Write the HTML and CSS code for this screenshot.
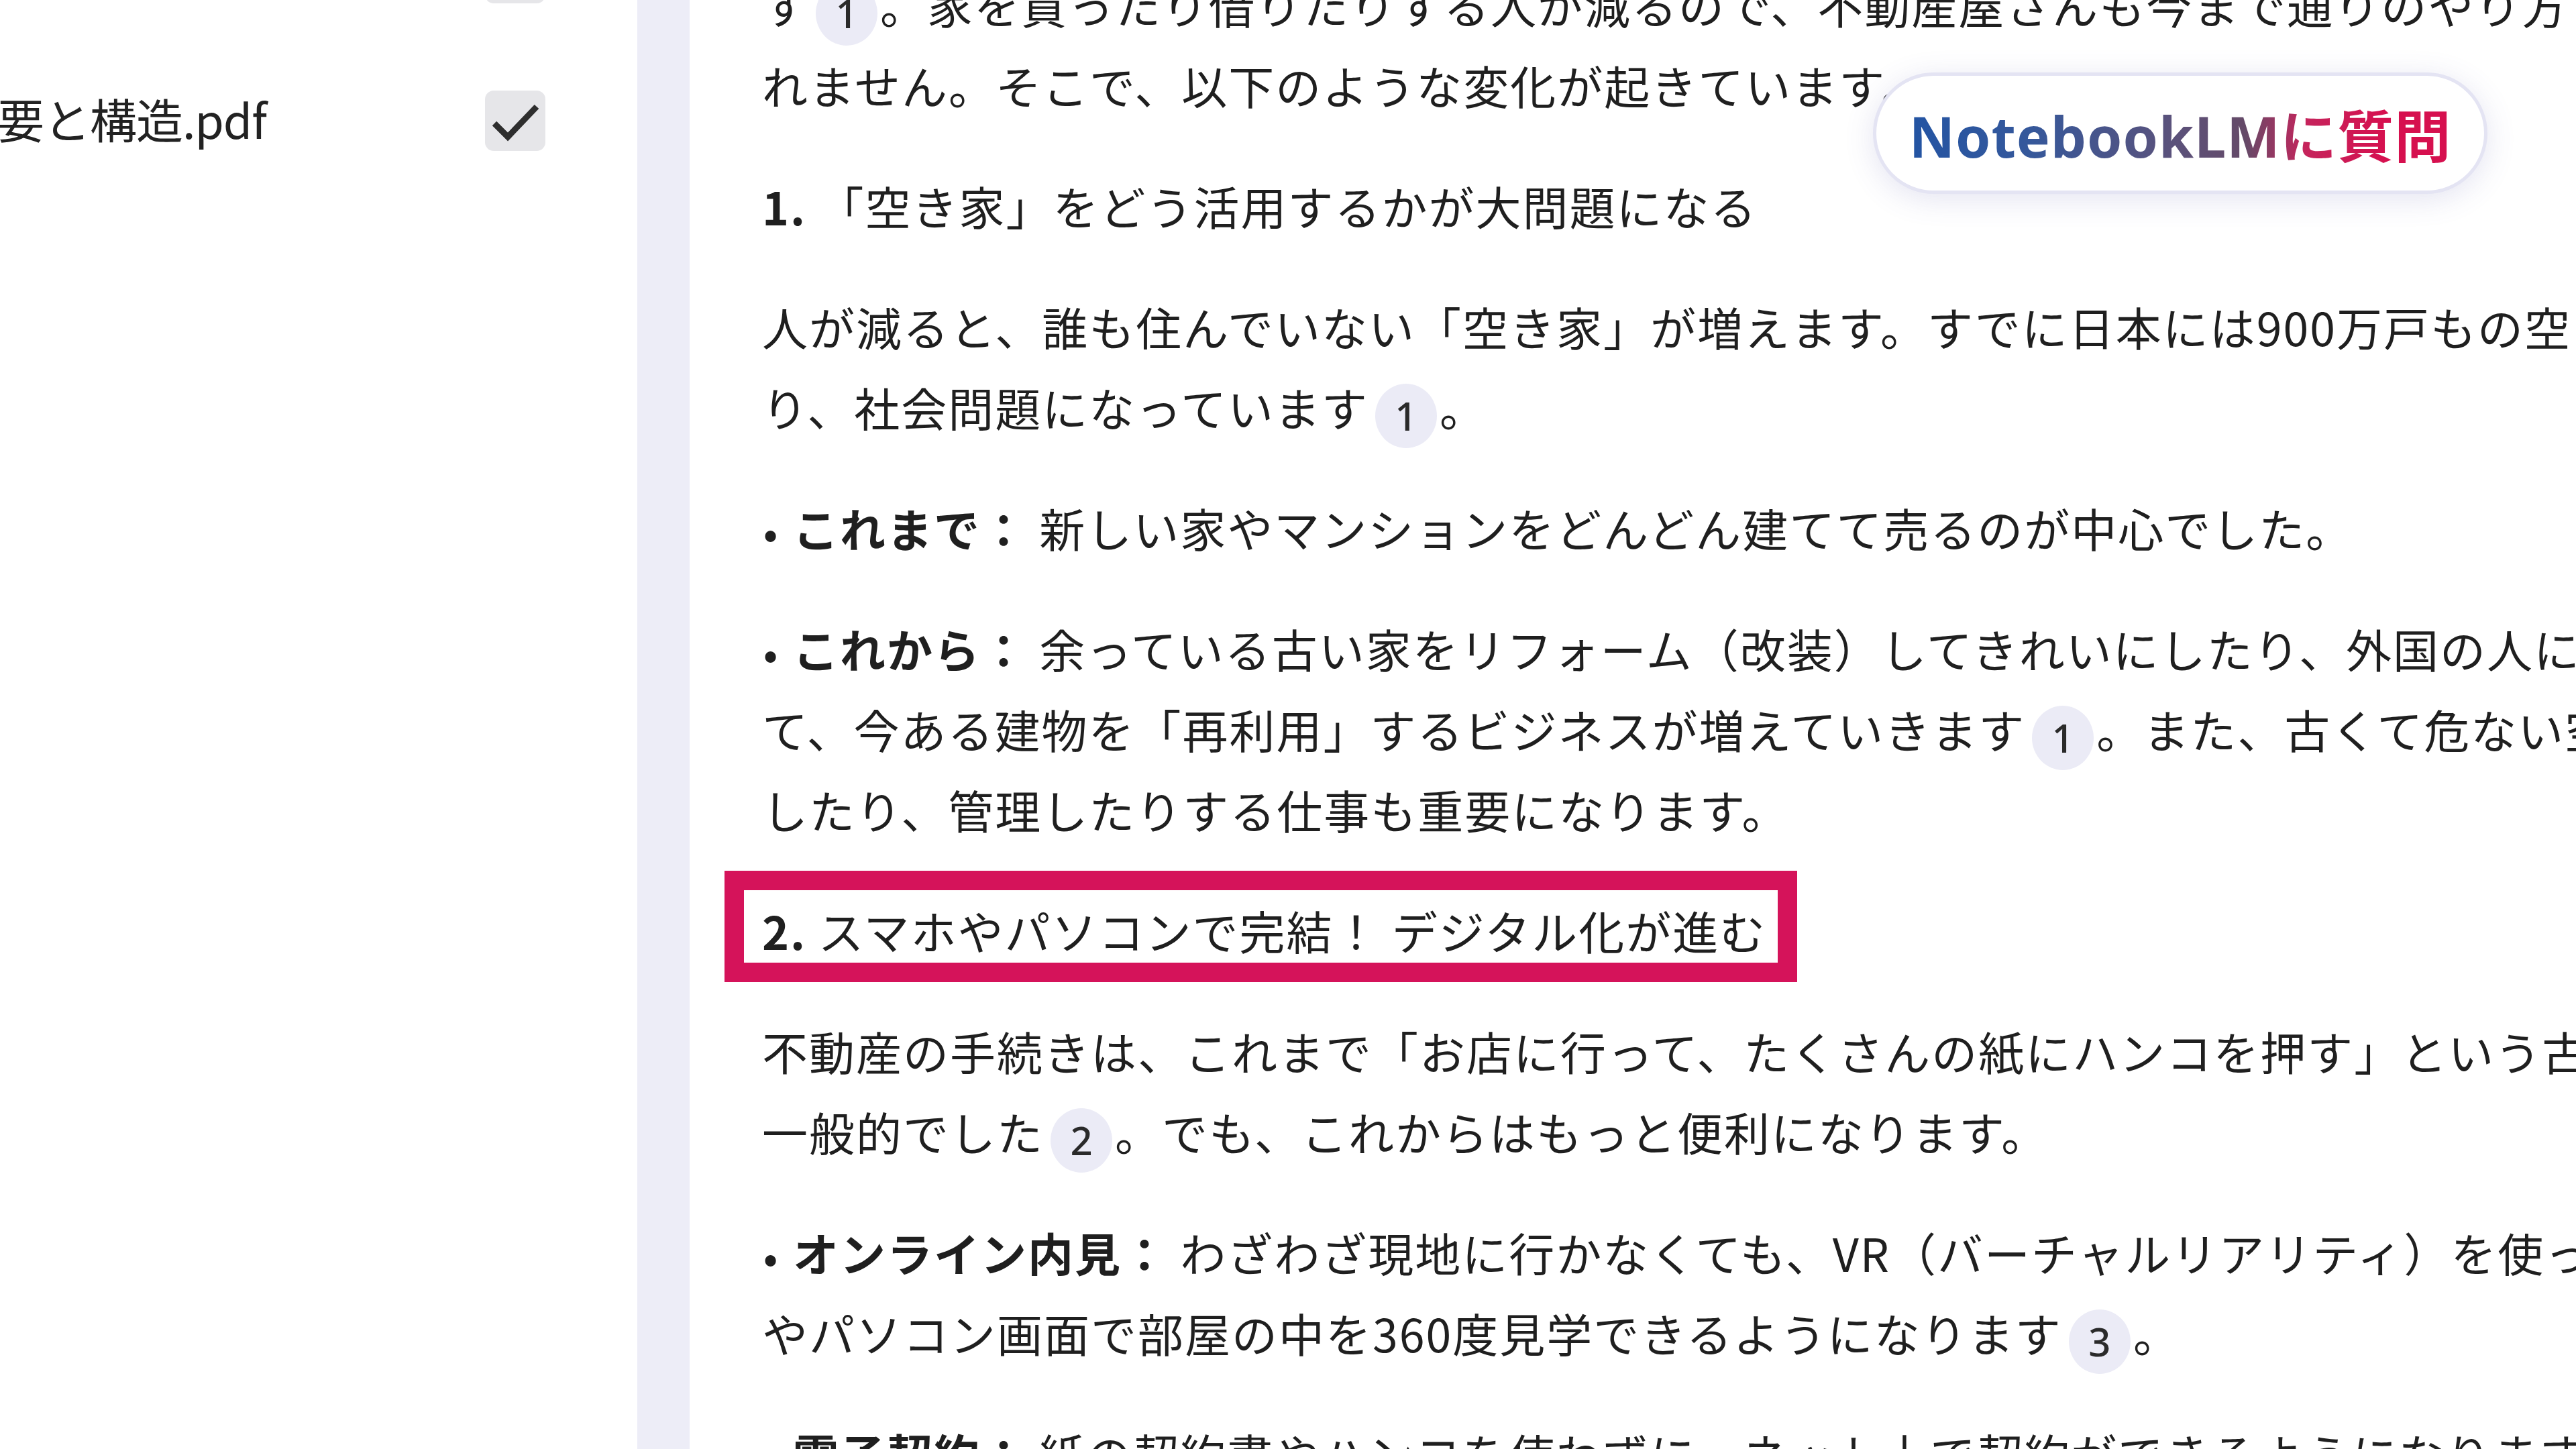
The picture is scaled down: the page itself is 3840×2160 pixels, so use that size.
FILE: index.html
```html
<!DOCTYPE html>
<html lang="ja">
<head>
  <meta charset="UTF-8" />
  <meta name="viewport" content="width=device-width, initial-scale=1.0"/>
  <title>NotebookLM</title>
  <link rel="stylesheet" href="styles.css">
</head>
<body>
  <div class="app">

    <!-- Sources panel -->
    <aside class="sources">
      <div class="source-row">
        <span class="source-name"></span>
        <span class="check">
          <svg viewBox="0 0 90 90" width="90" height="90"><rect width="90" height="90" rx="13" fill="#e6e6e9"/><polyline points="14,49 34,69 77,24" fill="none" stroke="#2e2e2e" stroke-width="9"/></svg>
        </span>
      </div>
      <div class="source-row">
        <span class="source-name"><span>不動産業界の概要と構造.pdf</span></span>
        <span class="check">
          <svg viewBox="0 0 90 90" width="90" height="90"><rect width="90" height="90" rx="13" fill="#e6e6e9"/><polyline points="14,49 34,69 77,24" fill="none" stroke="#2e2e2e" stroke-width="9"/></svg>
        </span>
      </div>
    </aside>

    <div class="gutter"></div>

    <!-- Chat answer -->
    <main class="chat">
      <button class="ask-pill"><span class="ask-text">NotebookLMに質問</span></button>

      <div class="answer">
        <p>す<span class="cite">1</span>。家を買ったり借りたりする人が減るので、不動産屋さんも今まで通りのやり方では生き残<br>れません。そこで、以下のような変化が起きています。</p>

        <p><b>1.</b> 「空き家」をどう活用するかが大問題になる</p>

        <p>人が減ると、誰も住んでいない「空き家」が増えます。すでに日本には900万戸もの空き家があ<br>り、社会問題になっています<span class="cite">1</span>。</p>

        <p><span class="dot">•</span><b>これまで：</b> 新しい家やマンションをどんどん建てて売るのが中心でした。</p>

        <p><span class="dot">•</span><b>これから：</b> 余っている古い家をリフォーム（改装）してきれいにしたり、外国の人に貸し出したりし<br>て、今ある建物を「再利用」するビジネスが増えていきます<span class="cite">1</span>。また、古くて危ない空き家を壊<br>したり、管理したりする仕事も重要になります。</p>

        <p><span class="boxed"><b>2.</b> スマホやパソコンで完結！ デジタル化が進む</span></p>

        <p>不動産の手続きは、これまで「お店に行って、たくさんの紙にハンコを押す」という古いやり方が<br>一般的でした<span class="cite">2</span>。でも、これからはもっと便利になります。</p>

        <p><span class="dot">•</span><b>オンライン内見：</b> わざわざ現地に行かなくても、VR（バーチャルリアリティ）を使ってスマホ<br>やパソコン画面で部屋の中を360度見学できるようになります<span class="cite">3</span>。</p>

        <p><span class="dot">•</span><b>電子契約：</b> 紙の契約書やハンコを使わずに、ネット上で契約ができるようになります。</p>
      </div>
    </main>

  </div>
</body>
</html>
```

FILE: styles.css
```css
* {
  box-sizing: border-box;
}
body {
  margin: 0;
  width: 3840px;
  height: 2160px;
  overflow: hidden;
  background-color: #fff;
  color: #1f1f1f;
  font-family: "Noto Sans CJK JP", "Noto Sans", sans-serif;
}
.app {
  display: flex;
  height: 2160px;
}

/* sources */
.sources {
  flex: none;
  width: 950px;
  padding-right: 137px;
  margin-top: -150px;
  display: flex;
  flex-direction: column;
}
.source-row {
  display: flex;
  align-items: center;
  height: 220px;
}
.source-name {
  flex: none;
  width: 397px;
  margin-right: auto;
  display: flex;
  justify-content: flex-end;
  white-space: nowrap;
  font-size: 70px;
  letter-spacing: -1px;
  color: #222;
  position: relative;
  top: -4px;
}
.check {
  display: flex;
  width: 90px;
  height: 90px;
}
.gutter {
  flex: none;
  width: 78px;
  background-color: #ededf7;
}

/* chat */
.chat {
  flex: 1;
  position: relative;
  overflow: hidden;
  padding-left: 108px;
}
.answer {
  margin-top: -53px;
  font-size: 68px;
  line-height: 120px;
  letter-spacing: 2px;
  white-space: nowrap;
}
.answer p {
  margin: 0 0 60px;
}
.answer b {
  font-weight: 700;
}
.dot {
  display: inline-block;
  width: 46px;
  font-size: 56px;
  font-weight: 700;
  line-height: 1;
  padding-left: 2px;
}
.cite {
  display: inline-flex;
  align-items: center;
  justify-content: center;
  width: 92px;
  height: 96px;
  margin: 0 4px 0 10px;
  border-radius: 50%;
  background-color: #ebebf6;
  color: #2a2a2a;
  font-family: "Noto Sans", sans-serif;
  font-size: 58px;
  font-weight: 500;
  letter-spacing: 0;
  line-height: 1;
  vertical-align: middle;
  position: relative;
  top: 2px;
}
.boxed {
  display: inline-block;
  position: relative;
}
.boxed::before {
  content: "";
  position: absolute;
  left: -56px;
  right: -46px;
  top: -29px;
  bottom: -17px;
  border: 29px solid #d5135a;
}

/* floating ask button */
.ask-pill {
  position: absolute;
  left: 1764px;
  top: 108px;
  width: 916px;
  height: 181px;
  border: 5px solid #e4e4f3;
  border-radius: 91px;
  background-color: #fff;
  box-shadow: 0 8px 44px rgba(90, 90, 170, 0.16);
  display: flex;
  align-items: center;
  justify-content: center;
  padding: 0;
  z-index: 5;
}
.ask-text {
  font-family: "Noto Sans", "Noto Sans CJK JP", sans-serif;
  font-size: 84px;
  font-weight: 700;
  letter-spacing: 1px;
  background: linear-gradient(90deg, #2354a3 0%, #35589b 22%, #5a527c 48%, #654a68 62%, #c5245c 73%, #d6104f 88%);
  -webkit-background-clip: text;
  background-clip: text;
  color: transparent;
}
```
